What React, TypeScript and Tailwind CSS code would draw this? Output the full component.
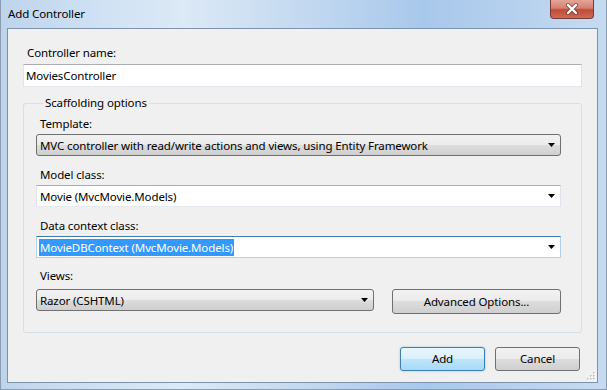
import React from 'react';

const sans = "font-['Noto_Sans',sans-serif]";

function Arrow() {
  return (
    <svg width="7" height="4" viewBox="0 0 7 4" className="shrink-0">
      <polygon points="0,0 7,0 3.5,4" fill="#000" />
    </svg>
  );
}

type ComboProps = {
  text: string;
  kind: 'list' | 'edit' | 'focus';
  selected?: boolean;
  className?: string;
};

function Combo({ text, kind, selected, className = '' }: ComboProps) {
  const look =
    kind === 'list'
      ? 'rounded-[3px] border border-[#707070] bg-[linear-gradient(to_bottom,#f2f2f2_0%,#ebebeb_50%,#dddddd_50%,#cfcfcf_100%)]'
      : kind === 'focus'
        ? 'border border-[#b5cfe7] border-t-[#3d7bad] bg-white'
        : 'border border-[#e2e3ea] border-t-[#abadb3] border-b-[#e3e9ef] bg-white';
  return (
    <div className={`flex h-[22px] items-center justify-between pl-[2px] pr-[5px] ${look} ${className}`}>
      <span
        className={`leading-[17px] px-px ${selected ? 'bg-[#3399ff] text-white' : 'text-black'}`}
      >
        {text}
      </span>
      <Arrow />
    </div>
  );
}

function Label({ children, className = '' }: { children: React.ReactNode; className?: string }) {
  return <div className={`h-[16px] leading-[16px] pl-[4px] text-black ${className}`}>{children}</div>;
}

function WinButton({ children, primary, className = '' }: { children: React.ReactNode; primary?: boolean; className?: string }) {
  return (
    <button
      className={`flex h-[24px] items-center justify-center rounded-[3px] border text-black ${
        primary
          ? 'border-[#3c7fb1] shadow-[0_0_2px_#6fc3f0] bg-[linear-gradient(to_bottom,#eaf6fd_0%,#d9f0fc_50%,#bee6fd_50%,#a7d9f5_100%)]'
          : 'border-[#707070] bg-[linear-gradient(to_bottom,#f2f2f2_0%,#ebebeb_50%,#dddddd_50%,#cfcfcf_100%)]'
      } ${className}`}
    >
      {children}
    </button>
  );
}

export default function App() {
  return (
    <div
      className={`flex h-[390px] w-[607px] flex-col border-l border-r border-b border-[#8a9cb0] text-[11.5px] tracking-[-0.12px] ${sans} bg-[linear-gradient(90deg,#bed4eb_0%,#cde0f3_14%,#dce9f6_30%,#c3d9f0_50%,#a8c8eb_70%,#b6d1ee_85%,#c6dbf1_100%)]`}
    >
      {/* Title bar */}
      <div className="flex h-[28px] shrink-0 items-start justify-between">
        <div className="pl-[7px] pt-[6px] leading-[16px] text-black">Add Controller</div>
        <button className="mr-[12px] flex h-[19px] w-[44px] items-center justify-center rounded-b-[4px] border border-t-0 border-[#7a3a34] bg-[linear-gradient(to_bottom,#e5a497_0%,#d47f70_45%,#c04a36_55%,#cc6d5a_100%)]">
          <svg width="14" height="12" viewBox="0 0 14 12">
            <path d="M3 2 L11 10 M11 2 L3 10" stroke="#5b2a25" strokeWidth="4" strokeLinecap="round" opacity="0.55" />
            <path d="M3 2 L11 10 M11 2 L3 10" stroke="#fff" strokeWidth="2.4" strokeLinecap="round" />
          </svg>
        </button>
      </div>

      {/* Client area */}
      <div className="relative mb-[6px] ml-[6px] mr-[8px] flex flex-1 flex-col border border-[#7d93ab] bg-[#f0f0f0] px-[15px] pt-[16px]">
        <Label className="pl-[2px]">Controller name:</Label>
        <div className="mt-[3px] flex h-[23px] items-center border border-[#e2e3ea] border-t-[#abadb3] border-b-[#e3e9ef] bg-white pl-[2px] text-black">
          MoviesController
        </div>

        <fieldset className="mt-[8px] rounded-[3px] border border-[#d5dfe5] pb-[18px] pl-[12px] pr-[20px]">
          <legend className="ml-[7px] px-[2px] leading-[16px] text-black">Scaffolding options</legend>
          <Label className="mt-[5px]">Template:</Label>
          <Combo
            className="mt-[2px]"
            kind="list"
            text="MVC controller with read/write actions and views, using Entity Framework"
          />
          <Label className="mt-[11px]">Model class:</Label>
          <Combo className="mt-[2px]" kind="edit" text="Movie (MvcMovie.Models)" />
          <Label className="mt-[11px]">Data context class:</Label>
          <Combo className="mt-[2px]" kind="focus" selected text="MovieDBContext (MvcMovie.Models)" />
          <Label className="mt-[10px]">Views:</Label>
          <div className="mt-[5px] flex items-start justify-between">
            <Combo className="w-[338px]" kind="list" text="Razor (CSHTML)" />
            <WinButton className="h-[25px] w-[169px]">Advanced Options...</WinButton>
          </div>
        </fieldset>

        <div className="mt-[14px] mr-[2px] flex justify-end gap-[10px]">
          <WinButton primary className="w-[85px]">Add</WinButton>
          <WinButton className="w-[85px]">Cancel</WinButton>
        </div>

        {/* size grip */}
        <svg className="absolute bottom-px right-px" width="10" height="10" viewBox="0 0 10 10">
          {[
            [8, 2], [5, 5], [8, 5], [2, 8], [5, 8], [8, 8],
          ].map(([x, y], i) => (
            <g key={i}>
              <rect x={x} y={y} width="1.5" height="1.5" fill="#fff" />
              <rect x={x - 1} y={y - 1} width="1.5" height="1.5" fill="#b8bcc2" />
            </g>
          ))}
        </svg>
      </div>
    </div>
  );
}
